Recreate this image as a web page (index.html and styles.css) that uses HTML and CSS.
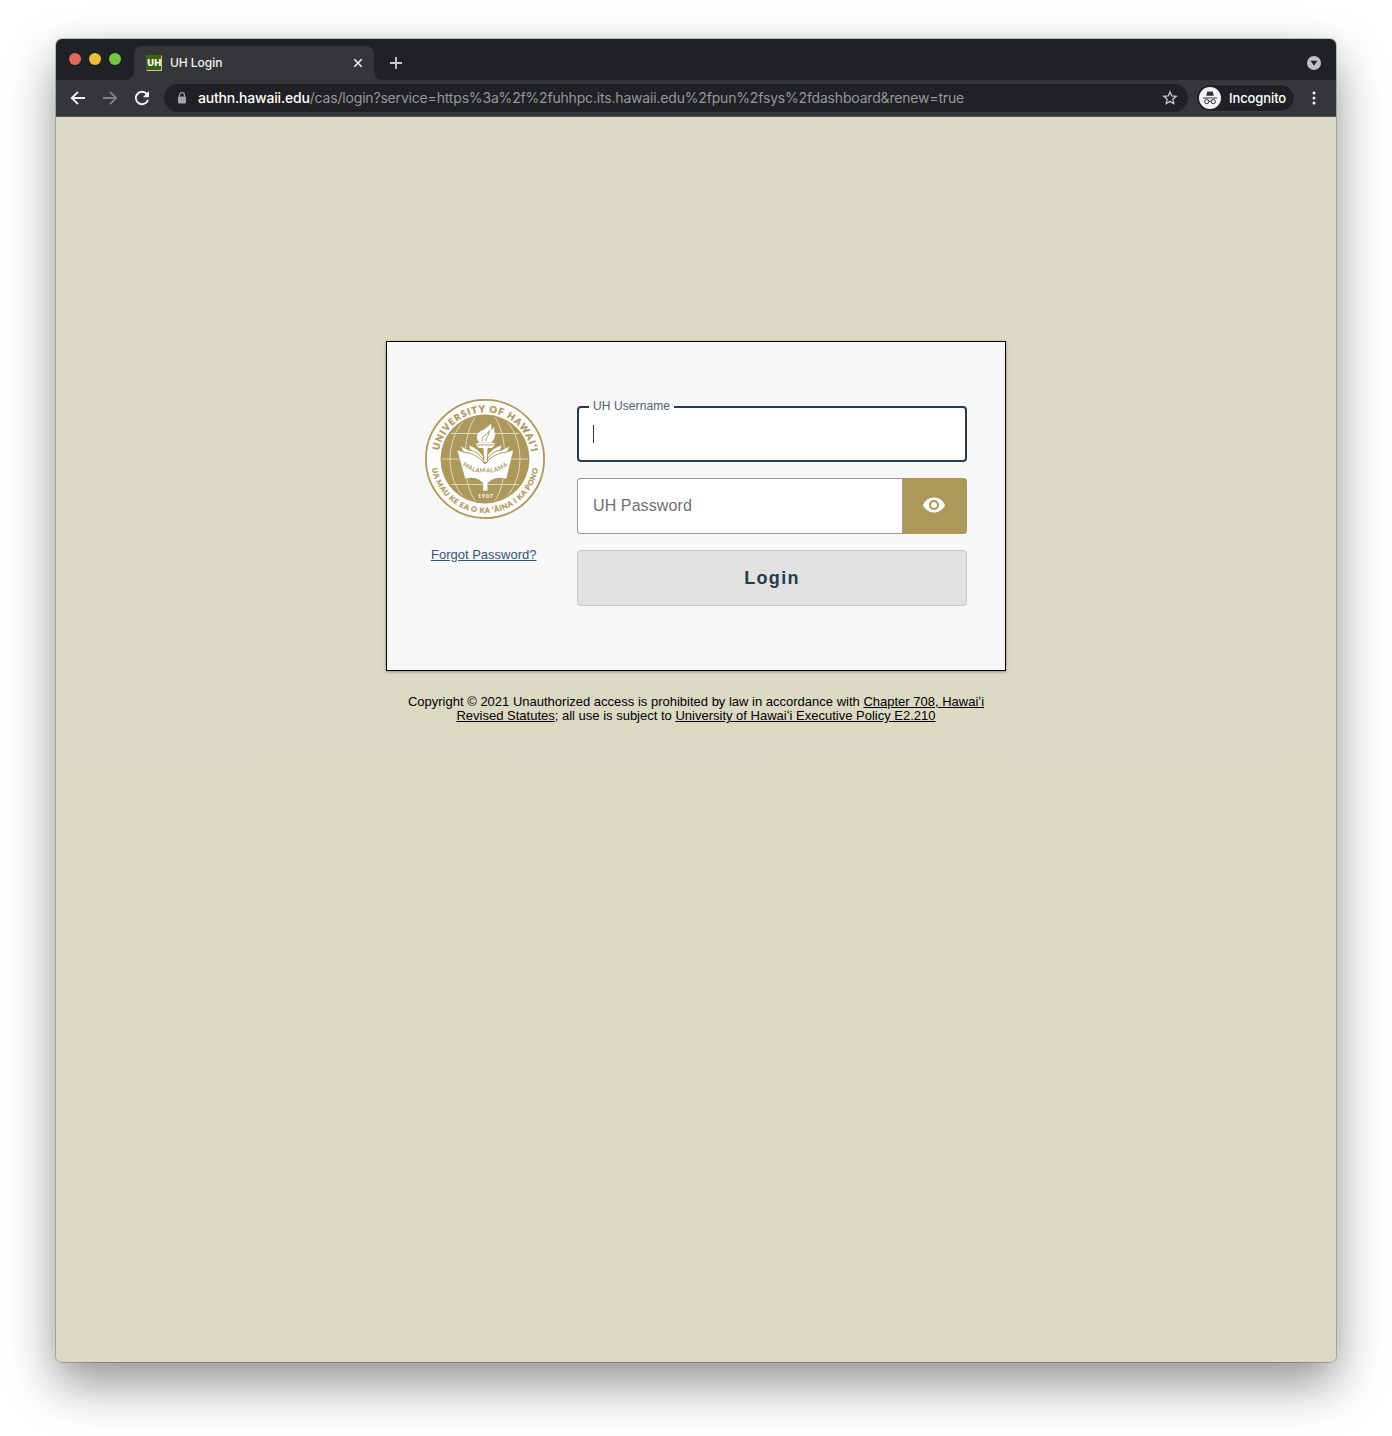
FILE: index.html
```html
<!DOCTYPE html>
<html lang="en">
<head>
<meta charset="utf-8">
<title>UH Login</title>
<link rel="stylesheet" href="styles.css">
</head>
<body>
<div class="window">
  <header class="tabstrip">
    <div class="lights"><span class="light red"></span><span class="light yellow"></span><span class="light green"></span></div>
    <div class="tab">
      <span class="favicon">UH</span>
      <span class="tab-title">UH Login</span>
      <svg class="tab-close" width="10" height="10" viewBox="0 0 10 10"><path d="M1.300 1.300l7.400 7.400M8.700 1.300l-7.400 7.400" stroke="#f1f3f4" stroke-width="1.600"/></svg>
    </div>
    <svg class="new-tab" width="12" height="12" viewBox="0 0 12 12"><path d="M6 0v12M0 6h12" stroke="#c4c7cb" stroke-width="1.9"/></svg>
    <svg class="tab-search" width="14" height="14" viewBox="0 0 14 14"><circle cx="7" cy="7" r="7" fill="#bdc1c6"/><path d="M4 5h6L7 9.300z" fill="#202124" stroke="#202124" stroke-width=".5"/></svg>
  </header>
  <div class="toolbar">
    <svg class="nav" width="16" height="16" viewBox="0 0 16 16"><path d="M15 8H2.200M8 1.800L1.800 8 8 14.200" fill="none" stroke="#f1f3f4" stroke-width="1.9"/></svg>
    <svg class="nav" width="16" height="16" viewBox="0 0 16 16"><path d="M1 8h12.800M8 1.800L14.200 8 8 14.200" fill="none" stroke="#808286" stroke-width="1.9"/></svg>
    <svg class="nav" width="16" height="16" viewBox="0 0 16 16"><path d="M13.200 4.500A6.200 6.200 0 1 0 14 9.700" fill="none" stroke="#f1f3f4" stroke-width="1.9"/><path d="M15 1v6.200H8.800z" fill="#f1f3f4"/></svg>
    <div class="address">
      <svg class="lock" width="10" height="12" viewBox="0 0 10 12"><path d="M2.500 5V3.200a2.500 2.500 0 0 1 5 0V5" fill="none" stroke="#9aa0a6" stroke-width="1.200"/><rect x="1" y="4.400" width="8" height="7" rx=".8" fill="#9fa1aa"/></svg>
      <span class="url"><b>authn.hawaii.edu</b>/cas/login?service=https%3a%2f%2fuhhpc.its.hawaii.edu%2fpun%2fsys%2fdashboard&amp;renew=true</span>
      <svg class="star" width="16" height="16" viewBox="0 0 16 16"><path d="M8 1.800l1.750 4.150 4.500.4-3.400 2.950 1.020 4.400L8 11.350 4.130 13.700l1.020-4.400-3.400-2.950 4.500-.4z" fill="none" stroke="#c4c7cb" stroke-width="1.300"/></svg>
    </div>
    <div class="incognito">
      <svg width="22" height="22" viewBox="0 0 22 22"><circle cx="11" cy="11" r="11" fill="#f1f3f4"/><path d="M7.200 8.800l1-4q.3-.7 1-.4L11 4.800l1.800-.4q.7-.3 1 .4l1 4z" fill="#303236"/><path d="M4 11h14" stroke="#303236" stroke-width="1"/><g fill="none" stroke="#303236"><circle cx="7.700" cy="14.600" r="2.100"/><circle cx="14.300" cy="14.600" r="2.100"/><path d="M9.800 14.400q1.200-.8 2.400 0"/></g></svg>
      <span>Incognito</span>
    </div>
    <svg class="menu" width="4" height="14" viewBox="0 0 4 14" fill="#f1f3f4"><circle cx="2" cy="2" r="1.500"/><circle cx="2" cy="7" r="1.500"/><circle cx="2" cy="12" r="1.500"/></svg>
  </div>
  <main class="page">
    <section class="card">
      <div class="brand">
        <svg class="seal" width="120" height="120" viewBox="0 0 120 120">
          <defs>
            <path id="arc-top" d="M13.200 60a46.800 46.800 0 0 1 93.600 0"/>
            <path id="arc-bottom" d="M6 60a54 54 0 0 0 108 0"/>
            <path id="arc-book" d="M36 64.500Q48 75.500 60 73Q72 75.500 85 64.500"/>
            <clipPath id="globe"><circle cx="60" cy="60" r="43"/></clipPath>
          </defs>
          <circle cx="60" cy="60" r="59.100" fill="#fdfcfa" stroke="#ad985b" stroke-width="1.800"/>
          <circle cx="60" cy="60" r="44.500" fill="#ad985b"/>
          <g clip-path="url(#globe)" fill="none" stroke="#e0d7bb" stroke-width="1">
            <ellipse cx="60" cy="60" rx="35" ry="48"/><ellipse cx="60" cy="60" rx="20" ry="48"/>
            <path d="M26 34.500h68M17 60h86M26 85.500h68"/>
          </g>
          <path d="M32 51l6.500 2-3-6 10 5-2-6q10 3 16.500 14Q66 49 77 46l-2 6 10-5-3 6 6.500-2L81.500 80Q70 77 62.800 84v8h-5v-8Q51 77 40 80z" fill="#fff" stroke="#ad985b" stroke-width=".6"/>
          <path d="M38 53q14 1 22 12q8-11 22-12M45 51q9 2 14 11M75 51q-9 2-14 11" fill="none" stroke="#ad985b" stroke-width="1"/>
          <path d="M51 43.500h19v3l-3 3h-4l-.8 14h-3.400l-.8-14h-4l-3-3z" fill="#fff" stroke="#ad985b" stroke-width="1"/>
          <path d="M54.500 43.500q-5-6 0-10.500 7-3 11.500-8 .5 4-.5 6 3-.5 3.500-2.500-.5 4 1 7-.500 4-3.500 8z" fill="#fff" stroke="#fff" stroke-width=".5"/>
          <path d="M57.500 42q-1.500-3.500 2-5.500 4-2 5-5-.5 4-2 6-2 2-1.500 4.500M52 46h17" fill="none" stroke="#ad985b" stroke-width=".9"/>
          <g fill="#ad985b" class="seal-text">
            <text font-size="9.200" stroke="#ad985b" stroke-width=".35"><textPath href="#arc-top" startOffset="8.500" textLength="131">UNIVERSITY OF HAWAIʻI</textPath></text>
            <text font-size="7.300" stroke="#ad985b" stroke-width=".2"><textPath href="#arc-bottom" startOffset="9.500" textLength="150">UA MAU KE EA O KA ʻĀINA I KA PONO</textPath></text>
            <text font-size="5.800"><textPath href="#arc-book" startOffset="2" textLength="49">MĀLAMALAMA</textPath></text>
            <text x="60.500" y="98.500" font-size="5" text-anchor="middle" textLength="15" fill="#fff">1907</text>
          </g>
        </svg>
        <a class="forgot" href="#">Forgot Password?</a>
      </div>
      <form class="form">
        <div class="field focused"><label for="user">UH Username</label><span class="caret"></span><input id="user" type="text"></div>
        <div class="password">
          <input type="password" placeholder="UH Password" aria-label="UH Password">
          <button type="button" class="reveal" aria-label="Show password"><svg width="24" height="24" viewBox="0 0 24 24"><path d="M12 4.500C7 4.500 2.730 7.610 1 12c1.730 4.390 6 7.500 11 7.500s9.270-3.110 11-7.500c-1.730-4.390-6-7.500-11-7.500zM12 17c-2.760 0-5-2.240-5-5s2.240-5 5-5 5 2.240 5 5-2.240 5-5 5zm0-8c-1.660 0-3 1.340-3 3s1.340 3 3 3 3-1.340 3-3-1.340-3-3-3z" fill="#fff"/></svg></button>
        </div>
        <button type="button" class="login">Login</button>
      </form>
    </section>
    <footer class="legal">Copyright © 2021 Unauthorized access is prohibited by law in accordance with <a href="#">Chapter 708, Hawaiʻi<br>Revised Statutes</a>; all use is subject to <a href="#">University of Hawaiʻi Executive Policy E2.210</a></footer>
  </main>
</div>
</body>
</html>
```

FILE: styles.css
```css
* { box-sizing: border-box; }
body { margin: 0; height: 1436px; padding: 39px 56px 0; background: #fff; font-family: "Liberation Sans", Arial, sans-serif; overflow: hidden; }
svg { display: block; flex: none; }
.window { display: flex; flex-direction: column; height: 1323px; border-radius: 6px; overflow: hidden; background: #dbd9c3; box-shadow: 0 0 0 1px rgba(0,0,0,.2), 0 22px 50px rgba(0,0,0,.42), 0 0 16px rgba(0,0,0,.05); }
.tabstrip { display: flex; flex: none; height: 41px; background: #202124; font-family: Inter, sans-serif; }
.lights { display: flex; gap: 8px; width: 78px; padding: 14px 0 0 13px; }
.light { width: 12px; height: 12px; border-radius: 50%; }
.red { background: #e16b5c; }
.yellow { background: #eebd3b; }
.green { background: #72c641; }
.tab { position: relative; display: flex; align-items: center; width: 240px; height: 34px; margin-top: 7px; padding: 0 11px 0 12px; border-radius: 8px 8px 0 0; background: #35363a; }
.tab::before, .tab::after { content: ""; position: absolute; bottom: 0; width: 8px; height: 8px; }
.tab::before { left: -8px; background: radial-gradient(circle at 0 0, transparent 7.5px, #35363a 8px); }
.tab::after { right: -8px; background: radial-gradient(circle at 100% 0, transparent 7.5px, #35363a 8px); }
.favicon { width: 16px; height: 16px; border: 1px solid #406010; border-right-color: #bfc5b2; border-bottom-color: #bfc5b2; background: #406010; color: #fff; font: bold 9px/14px "DejaVu Sans", sans-serif; letter-spacing: -.3px; text-align: center; }
.tab-title { flex: 1; margin-left: 8px; padding-bottom: 2px; color: #f1f3f4; font-size: 12px; font-weight: 500; letter-spacing: -.05px; }
.new-tab { margin: 18px 0 0 16px; }
.tab-search { margin: 17px 15px 0 auto; }
.toolbar { display: flex; flex: none; align-items: center; height: 37px; padding: 0 20px 0 14px; border-bottom: 1px solid #56575b; background: #35363a; font-family: Inter, sans-serif; }
.nav { margin-right: 16px; }
.address { display: flex; align-items: center; width: 1024px; height: 28px; margin-left: -2px; padding: 0 10px 0 13px; border-radius: 14px; background: #202124; }
.lock { margin-right: 11px; }
.url { flex: 1; padding-bottom: 2px; color: #96989c; font-size: 14px; white-space: nowrap; letter-spacing: -.18px; }
.url b { color: #fff; font-weight: 500; letter-spacing: -.19px; }
.incognito { display: flex; align-items: center; gap: 8px; width: 99px; height: 28px; margin-left: 8px; padding-left: 2px; border: 1px solid #3f4044; border-radius: 14px; background: #202124; color: #fff; font-size: 13px; font-weight: 500; letter-spacing: -.1px; }
.menu { margin-left: auto; }
.page { flex: 1; display: flex; flex-direction: column; align-items: center; padding-top: 224px; background: linear-gradient(#dcdac5, #dbd9c1); }
.card { display: flex; width: 620px; height: 330px; padding: 57px 38px; border: 1px solid #000; background: #f7f7f7; box-shadow: 0 1px 3px rgba(0,0,0,.35); }
.brand { width: 152px; }
.seal-text { font-family: Lato, "Liberation Sans", sans-serif; font-weight: 900; }
.forgot { display: block; margin: 28px 0 0 6px; color: #35547c; font-size: 13px; line-height: 15px; white-space: nowrap; }
.form { display: flex; flex-direction: column; gap: 16px; width: 390px; padding-top: 7px; }
.field { position: relative; height: 56px; border: 2px solid #263b4e; border-radius: 4px; background: #fff; }
.field label { position: absolute; left: 10px; top: -9px; padding: 0 4px; background: linear-gradient(#f7f7f7 7px, #fff 7px); color: #52606e; font-size: 12px; line-height: 15px; letter-spacing: .1px; white-space: nowrap; }
.caret { position: absolute; left: 14px; top: 17px; width: 1px; height: 18px; background: #263b4e; }
input { width: 100%; height: 100%; border: 0; padding: 0 15px; background: transparent; font: 16px "Liberation Sans", Arial, sans-serif; letter-spacing: .1px; outline: 0; }
input::placeholder { color: #707070; opacity: 1; }
.password { display: flex; height: 56px; border: 1px solid #999; border-right: 0; border-radius: 4px; background: #fff; }
.password input { flex: 1; min-width: 0; }
.reveal { width: 65px; margin: -1px 0; padding: 0 0 2px 19px; border: 0; border-left: 1px solid #999; border-radius: 0 4px 4px 0; background: #ad985b; }
.login { height: 56px; border: 1px solid #c4c4c4; border-radius: 4px; background: #e1e1e1; color: #263b4e; font: bold 18px "Liberation Sans", Arial, sans-serif; letter-spacing: 1.3px; }
.legal { margin-top: 24px; text-align: center; color: #000; font-size: 13px; line-height: 14px; white-space: nowrap; }
.legal a { color: inherit; }
```
